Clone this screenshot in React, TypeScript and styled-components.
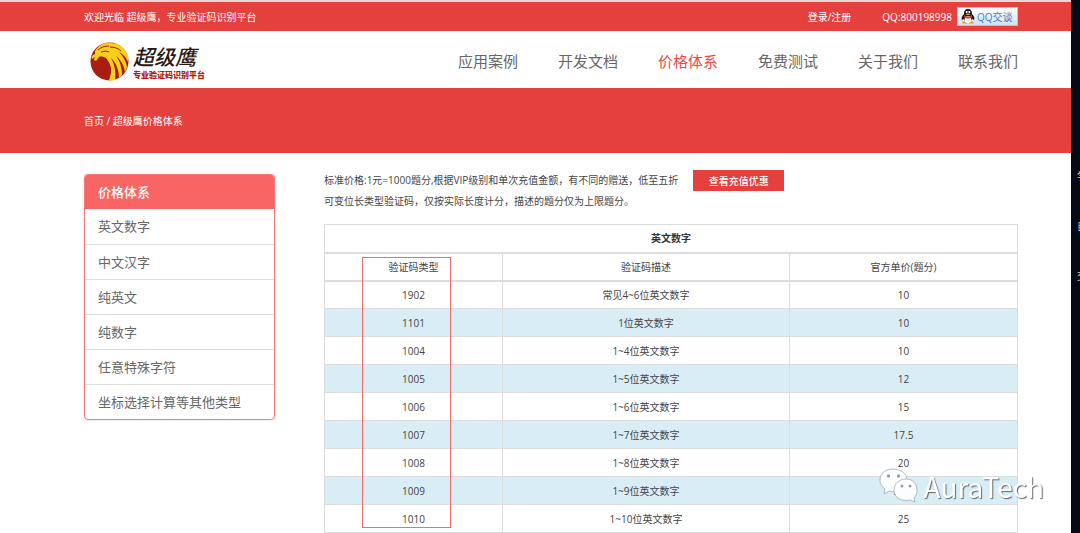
import React from 'react';
import styled, { createGlobalStyle, css } from 'styled-components';

const RED = '#e4403d';
const LINE = '#dcdcdc';

const GlobalStyle = createGlobalStyle`
  * { box-sizing: border-box; }
  body {
    margin: 0;
    background: #fff;
    color: #444;
    font: 10px/20px "Open Sans", "Noto Sans CJK SC", sans-serif;
  }
  a { color: inherit; text-decoration: none; }
`;

const Screen = styled.div`
  display: flex;
  min-height: 100vh;
`;

const Page = styled.div`
  flex: 1;
  min-width: 0;
`;

const EdgeStrip = styled.aside`
  flex: none;
  width: 9px;
  padding: 166px 0 0 6px;
  overflow: hidden;
  background: #060a16;
  color: #c8ccd2;
  white-space: nowrap;
`;

const EdgeText = styled.div`
  height: 50px;
`;

const band = css`
  display: flex;
  align-items: center;
  justify-content: space-between;
  padding: 0 53px 0 84px;
`;

const TopBar = styled.div`
  ${band}
  height: 31px;
  border-top: 2px solid #ead6d4;
  background: ${RED};
  color: #fff;
`;

const TopLinks = styled.div`
  display: flex;
  align-items: center;
`;

const Login = styled.a`
  margin-right: 31px;
`;

const QQButton = styled.button`
  display: flex;
  align-items: center;
  gap: 2px;
  width: 61px;
  height: 19px;
  margin-left: 5px;
  padding: 0 3px;
  border: 1px solid #a9c6e6;
  background: linear-gradient(#fff, #cfe2f6);
  color: #3f7dc0;
  font: inherit;
  white-space: nowrap;
`;

const Header = styled.header`
  ${band}
  height: 57px;
  background: #fff;
`;

const Logo = styled.a`
  display: flex;
  align-items: center;
  gap: 4px;
  padding: 4px 0 0 6px;
`;

const LogoWords = styled.span`
  display: flex;
  flex-direction: column;
`;

const LogoName = styled.span`
  color: #2a1712;
  font: italic 500 21px/26px "Noto Sans CJK SC", sans-serif;
`;

const LogoTag = styled.span`
  color: #ad1a12;
  font: 900 8px/12px "Noto Sans CJK SC", sans-serif;
`;

const Nav = styled.nav`
  display: flex;
  gap: 40px;
  font-size: 15px;
  padding-top: 2px;
`;

const NavLink = styled.a<{ $active?: boolean }>`
  color: ${(p) => (p.$active ? '#ee4a48' : '#666')};
`;

const Banner = styled.div`
  ${band}
  height: 65px;
  background: ${RED};
  color: #fff;
`;

const Content = styled.main`
  display: flex;
  align-items: flex-start;
  gap: 49px;
  padding: 17px 53px 0 84px;
`;

const Sidebar = styled.nav`
  flex: none;
  width: 191px;
  margin-top: 4px;
  border: 1px solid #f47a7a;
  border-radius: 4px;
  overflow: hidden;
  box-shadow: 0 0 3px #ddd;
  font-size: 13px;
`;

const SideHeading = styled.div`
  padding: 0 13px;
  background: #f96464;
  color: #fff;
  font-weight: 500;
  line-height: 34px;
`;

const SideLink = styled.a`
  display: block;
  height: 35px;
  padding: 0 13px;
  line-height: 35px;
  color: #666;

  & + & { border-top: 1px solid #ddd; }
`;

const Main = styled.section`
  flex: 1;
  min-width: 0;
`;

const Intro = styled.div`
  display: flex;
  align-items: flex-start;
  gap: 15px;
  margin-bottom: 12px;
`;

const IntroText = styled.p`
  margin: 0;
  line-height: 21px;
`;

const OfferButton = styled.button`
  width: 91px;
  height: 21px;
  padding: 0;
  border: 0;
  background: ${RED};
  color: #fff;
  font: inherit;
  font-weight: 500;
`;

const TableBox = styled.div`
  position: relative;
`;

const Table = styled.table`
  width: 100%;
  table-layout: fixed;
  border-collapse: collapse;
  text-align: center;
`;

const Cell = styled.td`
  height: 28px;
  padding: 0;
  border: 1px solid ${LINE};
`;

const HeadCell = styled.th`
  height: 28px;
  padding: 0;
  border: 1px solid ${LINE};
  border-bottom-width: 2px;
  font-weight: 400;
`;

const TitleCell = styled(HeadCell)`
  color: #333;
  font-weight: 700;
`;

const Row = styled.tr`
  &:nth-child(even) { background: #d9edf6; }
`;

const TypeHighlight = styled.div`
  position: absolute;
  top: 33px;
  left: 38px;
  width: 89px;
  height: 271px;
  border: 1px solid #f4696b;
  pointer-events: none;
`;

const Watermark = styled.div`
  position: fixed;
  right: 36px;
  bottom: 29px;
  display: flex;
  align-items: center;
  gap: 5px;
  color: #fff;
  font: 28px/34px "Noto Sans CJK SC", sans-serif;
  text-shadow: 1px 1px 1px #666;
`;

const Eagle = () => (
  <svg width="39" height="39" viewBox="0 0 39 39" aria-hidden="true">
    <circle cx="19.500" cy="19.500" r="19" fill="#a81d10" />
    <path d="M5 9C9 3 15 0 21 1c6 0 11 3 14 7 2 3 4 7 3 12-2-5-5-8-9-10 4 4 7 9 8 15l-2 5c-1-6-4-12-9-16 4 5 6 12 6 19l-3 3c0-7-2-14-8-20 4 7 5 15 4 22l-6 1c4-7 3-16-3-23-2-1-5-2-7-1l-3 4-2-1 1-3-3 2c-1-2 0-4 3-5z" fill="#f7cf1d" />
    <path d="M8 8c3-3 7-4 11-4M11 10l5-1 3 1M20 5c4 0 8 1 11 4" fill="none" stroke="#a81d10" strokeWidth="1" />
    <path d="M19 17c3 6 3 13 0 21h5c2-8 0-15-5-21z" fill="#f7cf1d" />
  </svg>
);

const Penguin = () => (
  <svg width="14" height="15" viewBox="0 0 14 15" aria-hidden="true">
    <ellipse cx="4" cy="13.500" rx="3" ry="1.300" fill="#f5a21b" />
    <ellipse cx="10" cy="13.500" rx="3" ry="1.300" fill="#f5a21b" />
    <path d="M7 0c3 0 4 2 4 5 2 2 3 4 2 6l-2-1c0 3-8 3-8 0l-2 1c-1-2 0-4 2-6 0-3 1-5 4-5z" fill="#1b1b22" />
    <ellipse cx="7" cy="10.500" rx="3.300" ry="3.500" fill="#fff" />
    <path d="M3 6c2 2 6 2 8 0v2c-2 2-6 2-8 0z" fill="#e03a2e" />
    <circle cx="5.700" cy="3" r="1" fill="#fff" />
    <circle cx="8.300" cy="3" r="1" fill="#fff" />
    <ellipse cx="7" cy="5.200" rx="2.200" ry=".8" fill="#f5a21b" />
  </svg>
);

const WeChat = () => (
  <svg width="40" height="36" viewBox="0 0 40 36" aria-hidden="true">
    <g fill="#fbfdfe" stroke="#a4abb0" strokeWidth=".8">
      <path d="M14 1C6 1 1 6 1 12c0 4 2 7 5 9l-1 5 5-3c10 3 18-3 18-11C28 6 22 1 14 1z" />
      <path d="M27 11c-7 0-12 5-12 11 0 8 8 12 16 10l5 2-1-4c6-6 3-19-8-19z" />
    </g>
    <g fill="#9aa1a6">
      <circle cx="9.500" cy="8" r="1.700" />
      <circle cx="19.500" cy="8" r="1.700" />
      <circle cx="23" cy="18" r="1.500" />
      <circle cx="31" cy="18" r="1.500" />
    </g>
  </svg>
);

const navItems = ['应用案例', '开发文档', '价格体系', '免费测试', '关于我们', '联系我们'];
const sideItems = ['英文数字', '中文汉字', '纯英文', '纯数字', '任意特殊字符', '坐标选择计算等其他类型'];
const prices = [
  ['1902', '常见4~6位英文数字', '10'],
  ['1101', '1位英文数字', '10'],
  ['1004', '1~4位英文数字', '10'],
  ['1005', '1~5位英文数字', '12'],
  ['1006', '1~6位英文数字', '15'],
  ['1007', '1~7位英文数字', '17.5'],
  ['1008', '1~8位英文数字', '20'],
  ['1009', '1~9位英文数字', '22.5'],
  ['1010', '1~10位英文数字', '25'],
];

export default function App() {
  return (
    <Screen>
      <GlobalStyle />
      <Page>
        <TopBar>
          <span>欢迎光临 超级鹰，专业验证码识别平台</span>
          <TopLinks>
            <Login href="#login">登录/注册</Login>
            <span>QQ:800198998</span>
            <QQButton type="button"><Penguin />QQ交谈</QQButton>
          </TopLinks>
        </TopBar>
        <Header>
          <Logo href="#home">
            <Eagle />
            <LogoWords>
              <LogoName>超级鹰</LogoName>
              <LogoTag>专业验证码识别平台</LogoTag>
            </LogoWords>
          </Logo>
          <Nav>
            {navItems.map((item) => (
              <NavLink key={item} href="#nav" $active={item === '价格体系'}>{item}</NavLink>
            ))}
          </Nav>
        </Header>
        <Banner>
          <span><a href="#home">首页</a> / 超级鹰价格体系</span>
        </Banner>
        <Content>
          <Sidebar>
            <SideHeading>价格体系</SideHeading>
            {sideItems.map((item) => (
              <SideLink key={item} href="#type">{item}</SideLink>
            ))}
          </Sidebar>
          <Main>
            <Intro>
              <IntroText>
                标准价格:1元=1000题分,根据VIP级别和单次充值金额，有不同的赠送，低至五折
                <br />
                可变位长类型验证码，仅按实际长度计分，描述的题分仅为上限题分。
              </IntroText>
              <OfferButton type="button">查看充值优惠</OfferButton>
            </Intro>
            <TableBox>
              <Table>
                <colgroup>
                  <col width="178" />
                  <col />
                  <col width="228" />
                </colgroup>
                <thead>
                  <tr><TitleCell colSpan={3}>英文数字</TitleCell></tr>
                  <tr>
                    <HeadCell>验证码类型</HeadCell>
                    <HeadCell>验证码描述</HeadCell>
                    <HeadCell>官方单价(题分)</HeadCell>
                  </tr>
                </thead>
                <tbody>
                  {prices.map(([type, text, price]) => (
                    <Row key={type}>
                      <Cell>{type}</Cell>
                      <Cell>{text}</Cell>
                      <Cell>{price}</Cell>
                    </Row>
                  ))}
                </tbody>
              </Table>
              <TypeHighlight />
            </TableBox>
          </Main>
        </Content>
      </Page>
      <EdgeStrip>
        <EdgeText>学</EdgeText>
        <EdgeText>自</EdgeText>
        <EdgeText>交</EdgeText>
      </EdgeStrip>
      <Watermark><WeChat />AuraTech</Watermark>
    </Screen>
  );
}
